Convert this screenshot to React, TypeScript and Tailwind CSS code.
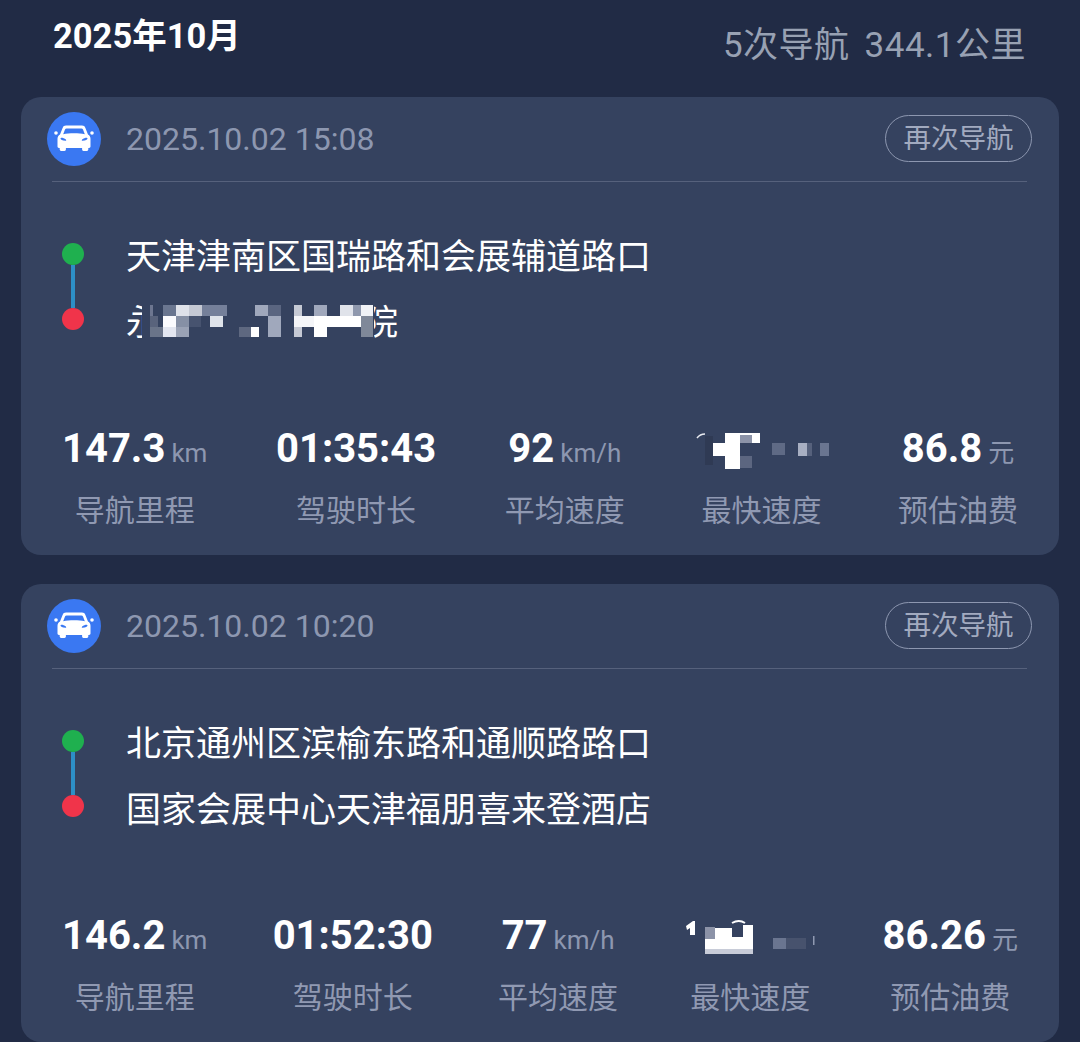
const CN = "font-['Roboto','Noto_Sans_CJK_SC',sans-serif]"

function CarBadge() {
  return (
    <div className="flex h-[54px] w-[54px] shrink-0 items-center justify-center rounded-full bg-[#3a78f2]">
      <svg width="54" height="54" viewBox="0 0 54 54">
        <path
          fill="#fff"
          fillRule="evenodd"
          d="M19 13.5h16c1.6 0 2.8.8 3.4 2.4l2.6 6.6c1.6 1 2.5 2.4 2.5 4.2v7.8c0 .8-.6 1.4-1.4 1.4h-.8v1.6c0 .8-.6 1.4-1.4 1.4h-3.4c-.8 0-1.4-.6-1.4-1.4V36H18.9v1.6c0 .8-.6 1.4-1.4 1.4h-3.4c-.8 0-1.4-.6-1.4-1.4V36h-.8c-.8 0-1.4-.6-1.4-1.4v-7.8c0-1.8.9-3.2 2.5-4.2l2.6-6.6c.6-1.6 1.8-2.4 3.4-2.4zM19.6 16.5c-.8 0-1.3.4-1.6 1.1l-1.8 4.6c3-.6 6.6-.9 10.8-.9s7.800.3 10.800.9L36 17.600c-.3-.7-.8-1.100-1.600-1.100zM13.500 26.500c0 1 1.800 2 5 2.200.8 0 1-.8.400-1.300-1.400-1-3.200-1.700-4.500-1.700-.6 0-.9.300-.9.800zM40.500 26.500c0-.5-.3-.8-.9-.8-1.300 0-3.100.7-4.500 1.700-.6.500-.4 1.300.4 1.300 3.200-.2 5-1.200 5-2.200z"
        />
        <circle cx="9" cy="21" r="1.800" fill="#fff" />
        <circle cx="45" cy="21" r="1.800" fill="#fff" />
      </svg>
    </div>
  )
}

// mosaic over the hidden destination, [x, y, w, h, colour]
const routeMosaic: [number, number, number, number, string][] = [
  [0, 4, 3, 11, '#6d7690'],
  [0, 15, 8, 11, '#59637c'],
  [0, 26, 13, 10, '#6a7489'],
  [13, 4, 13, 11, '#6a7690'],
  [26, 4, 13, 11, '#dfe2ea'],
  [39, 4, 13, 11, '#c5c9d4'],
  [52, 4, 25, 11, '#75809a'],
  [13, 15, 13, 11, '#fbfbfe'],
  [26, 15, 13, 11, '#8690a5'],
  [39, 15, 12, 11, '#47536f'],
  [60, 15, 13, 11, '#dfe3ea'],
  [13, 26, 13, 10, '#e3e6f0'],
  [26, 26, 13, 10, '#9aa2b5'],
  [89, 26, 12, 10, '#5e6880'],
  [101, 26, 8, 10, '#ffffff'],
  [105, 4, 13, 11, '#a0a8bc'],
  [118, 4, 13, 11, '#5a6580'],
  [118, 15, 13, 21, '#a0a8bc'],
  [144, 4, 8, 32, '#c5c9d4'],
  [144, 15, 21, 11, '#f4f5f8'],
  [164, 4, 13, 11, '#a0a8bc'],
  [164, 15, 13, 21, '#ffffff'],
  [177, 15, 35, 11, '#ffffff'],
  [190, 4, 13, 11, '#e0e3ea'],
  [203, 4, 8, 11, '#8f98ad'],
  [211, 4, 12, 11, '#f0f2f6'],
  [211, 15, 12, 21, '#7f8899'],
]

function RouteMosaic() {
  return (
    <svg className="absolute left-[16px] top-[-3px] blur-[0.6px]" width="232" height="42" viewBox="0 0 232 42">
      <rect width="232" height="42" fill="#35425f" />
      <g transform="translate(8 0)">
        {routeMosaic.map(([x, y, w, h, c], i) => (
          <rect key={i} x={x} y={y} width={w} height={h} fill={c} />
        ))}
      </g>
    </svg>
  )
}

function SpeedMosaicA() {
  return (
    <svg className="blur-[0.4px]" width="136" height="40" viewBox="-4 0 136 40">
      <path d="M0 7 q3-4 8-4" stroke="#e8eaf0" strokeWidth="1.500" fill="none" />
      <rect x="8" y="5" width="8" height="29" fill="#2f3a54" />
      <rect x="16" y="12" width="27" height="13" fill="#ffffff" />
      <rect x="28" y="2" width="15" height="36" fill="#ffffff" />
      <rect x="43" y="2" width="20" height="10" fill="#ffffff" />
      <rect x="43" y="4" width="12" height="8" fill="#8c93a8" />
      <rect x="43" y="25" width="12" height="12" fill="#5c6680" />
      <rect x="75" y="12" width="13" height="12" fill="#5f6a85" />
      <rect x="101" y="12" width="9" height="13" fill="#a8afc2" />
      <rect x="110" y="12" width="5" height="13" fill="#56617c" />
      <rect x="123" y="12" width="12" height="13" fill="#6a7590" />
    </svg>
  )
}

function SpeedMosaicB() {
  return (
    <svg className="blur-[0.4px]" width="134" height="40" viewBox="-3 0 134 40">
      <path d="M0 8 l7-5 h2 v14 h-5 v-7 l-3 2z" fill="#ffffff" />
      <path d="M46 5 q7-4 13 0" stroke="#ffffff" strokeWidth="2" fill="none" />
      <rect x="19" y="19" width="48" height="12" fill="#ffffff" />
      <rect x="19" y="31" width="48" height="5" fill="#c8ccd8" />
      <rect x="29" y="10" width="17" height="9" fill="#ffffff" />
      <rect x="57" y="7" width="10" height="12" fill="#ffffff" />
      <rect x="19" y="9" width="10" height="12" fill="#8c93a8" />
      <rect x="87" y="20" width="13" height="11" fill="#6a7590" />
      <rect x="100" y="20" width="20" height="11" fill="#47526d" />
      <rect x="127" y="18" width="1.500" height="9" fill="#9099b2" />
    </svg>
  )
}

function Stat({ value, unit, label, mask }: { value?: string; unit?: string; label: string; mask?: React.ReactNode }) {
  return (
    <div className="flex flex-col items-center">
      <div className="flex h-[44px] items-baseline whitespace-nowrap">
        {mask ? (
          <div className="mt-[4px] self-start">{mask}</div>
        ) : (
          <>
            <span className="text-[40px] leading-[44px] font-bold text-white">{value}</span>
            {unit && <span className="ml-[6px] text-[26px] text-[#8d97b0]">{unit}</span>}
          </>
        )}
      </div>
      <div className="mt-[22px] text-[30px] leading-[36px] whitespace-nowrap text-[#9099b2]">{label}</div>
    </div>
  )
}

type Trip = {
  time: string
  from: string
  to?: string
  stats: { value?: string; unit?: string; label: string; mask?: React.ReactNode }[]
}

const trips: Trip[] = [
  {
    time: '2025.10.02 15:08',
    from: '天津津南区国瑞路和会展辅道路口',
    stats: [
      { value: '147.3', unit: 'km', label: '导航里程' },
      { value: '01:35:43', label: '驾驶时长' },
      { value: '92', unit: 'km/h', label: '平均速度' },
      { label: '最快速度', mask: <SpeedMosaicA /> },
      { value: '86.8', unit: '元', label: '预估油费' },
    ],
  },
  {
    time: '2025.10.02 10:20',
    from: '北京通州区滨榆东路和通顺路路口',
    to: '国家会展中心天津福朋喜来登酒店',
    stats: [
      { value: '146.2', unit: 'km', label: '导航里程' },
      { value: '01:52:30', label: '驾驶时长' },
      { value: '77', unit: 'km/h', label: '平均速度' },
      { label: '最快速度', mask: <SpeedMosaicB /> },
      { value: '86.26', unit: '元', label: '预估油费' },
    ],
  },
]

function TripCard({ trip }: { trip: Trip }) {
  return (
    <div className="h-[458px] shrink-0 rounded-[20px] bg-[#35425f] pl-[26px] pr-[27px] pt-[15px]">
      <div className="flex h-[54px] items-center">
        <CarBadge />
        <span className="ml-[25px] text-[32px] leading-none text-[#8d97b0]">{trip.time}</span>
        <button className="mt-[-1px] ml-auto flex h-[47px] w-[147px] shrink-0 items-center justify-center rounded-full border border-[#8d97b0] text-[27.500px] leading-none text-[#a2aabf]">
          再次导航
        </button>
      </div>
      <div className="ml-[5px] mr-[5px] mt-[15px] h-px bg-[#56617c]" />

      <div className="mt-[56px] flex h-[102px] items-start">
        <div className="ml-[15px] flex w-[22px] shrink-0 flex-col items-center pt-[5px]">
          <div className="h-[22px] w-[22px] rounded-full bg-[#1fb04f]" />
          <div className="h-[43px] w-[4px] bg-[#2d8fc6]" />
          <div className="h-[22px] w-[22px] rounded-full bg-[#f0344a]" />
        </div>
        <div className="ml-[42px] flex flex-col text-[35px] leading-[40px] text-white">
          <div className="whitespace-nowrap">{trip.from}</div>
          {trip.to ? (
            <div className="mt-[26px] whitespace-nowrap">{trip.to}</div>
          ) : (
            <div className="relative mt-[26px] flex w-[272px] justify-between">
              <span>永</span>
              <span>院</span>
              <RouteMosaic />
            </div>
          )}
        </div>
      </div>

      <div className="mt-[87px] ml-[15px] mr-[14px] flex justify-between">
        {trip.stats.map((s) => (
          <Stat key={s.label} {...s} />
        ))}
      </div>
    </div>
  )
}

export default function App() {
  return (
    <div className={`${CN} h-[1042px] w-[1080px] overflow-hidden bg-[#212b45]`}>
      <div className="flex h-[97px] items-start justify-between pl-[53px] pr-[54px]">
        <h1 className="mt-[16px] text-[34.500px] leading-[40px] font-bold text-white">2025年10月</h1>
        <div className="mt-[26px] flex gap-[15px] text-[35px] leading-[40px] tracking-[0.5px] whitespace-nowrap text-[#98a1b3]">
          <span>5次导航</span>
          <span>344.1公里</span>
        </div>
      </div>
      <div className="flex flex-col gap-[29px] px-[21px]">
        {trips.map((t) => (
          <TripCard key={t.time} trip={t} />
        ))}
      </div>
    </div>
  )
}
